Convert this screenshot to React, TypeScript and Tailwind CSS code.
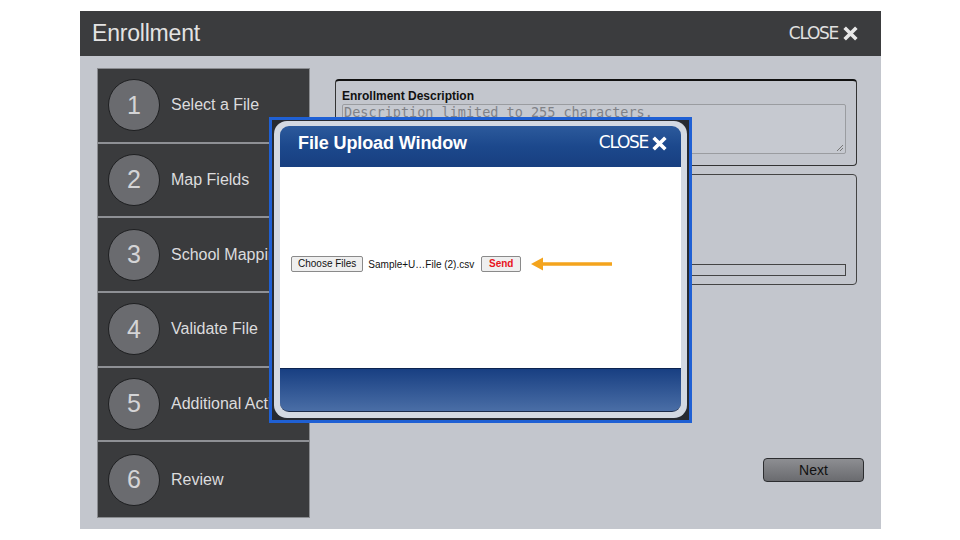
import React from "react";

const CloseX = ({ color, size = 17 }: { color: string; size?: number }) => (
  <svg width={size} height={size} viewBox="0 0 16 16">
    <path d="M2.5 2.5 L13.5 13.5 M13.5 2.5 L2.5 13.5" stroke={color} strokeWidth="3.4" strokeLinecap="butt" />
  </svg>
);

const steps = ["Select a File", "Map Fields", "School Mapping", "Validate File", "Additional Actions", "Review"];

export default function App() {
  return (
    <div className="w-[960px] h-[540px] bg-white relative overflow-hidden" style={{ fontFamily: '"Liberation Sans", Arial, sans-serif' }}>
      <div className="absolute left-[80px] top-[11px] w-[801px] h-[518px] bg-[#c3c6cd] flex flex-col rounded-tl-[3px]">
        {/* Header */}
        <div className="h-[45px] bg-[#3b3c3e] flex items-center justify-between pl-[12px] pr-[22px] shrink-0">
          <span className="text-[23px] text-[#e3e3e3] tracking-[-0.2px]">Enrollment</span>
          <div className="flex items-center gap-[4px] text-[#e0e0e0]">
            <span className="text-[17px] tracking-[-1.3px]" style={{ fontFamily: '"DejaVu Sans", sans-serif' }}>CLOSE</span>
            <CloseX color="#e8e8e8" size={17} />
          </div>
        </div>
        {/* Body */}
        <div className="flex pl-[17px] pt-[12px] flex-1">
          <div className="w-[213px] h-[450px] bg-[#3a3b3d] border border-[#8a8c90] flex flex-col shrink-0">
            {steps.map((s, i) => (
              <div
                key={s}
                className={`h-[75px] flex items-center pl-[10px] gap-[11px] overflow-hidden ${i < 5 ? "border-b-2 border-[#8e9095]" : ""}`}
              >
                <div className="w-[52px] h-[52px] rounded-full bg-[#6a6b6f] border border-[#1e1f21] flex items-center justify-center shrink-0">
                  <span className="text-[25px] text-[#d4d4d6]">{i + 1}</span>
                </div>
                <span className="text-[16px] text-[#dcdcde] whitespace-nowrap">{s}</span>
              </div>
            ))}
          </div>
          <div className="flex flex-col ml-[25px] w-[529px]">
            <div className="mt-[11px] w-[522px] h-[87px] border border-[#333] border-t-2 border-t-[#111] rounded-[4px] px-[6px] pt-[8px]">
              <div className="text-[12px] font-bold text-[#111] leading-[14px]">Enrollment Description</div>
              <div className="mt-[1px] w-[504px] h-[50px] border border-[#9a9ca0] rounded-[2px] bg-[#c6c9d0] px-[1px] relative text-[13.5px] leading-[15px]">
                <span className="text-[#808288]" style={{ fontFamily: '"DejaVu Sans Mono", monospace' }}>
                  Description limited to 255 characters.
                </span>
                <svg className="absolute right-[1px] bottom-[1px]" width="8" height="8" viewBox="0 0 8 8">
                  <path d="M7 1 L1 7 M7 4 L4 7" stroke="#777" strokeWidth="1" />
                </svg>
              </div>
            </div>
            <div className="mt-[8px] w-[522px] h-[111px] border border-[#444] rounded-[4px] flex flex-col justify-end px-[10px] pb-[8px]">
              <div className="w-full h-[12px] border border-[#444] bg-[#c3c6cd]" />
            </div>
            <button className="self-end mt-[173px] w-[101px] h-[24px] rounded-[4px] border border-[#2c2d30] bg-gradient-to-b from-[#8d8e92] to-[#6a6b6f] text-[14px] text-[#111]">
              Next
            </button>
          </div>
        </div>
      </div>

      {/* Modal overlay */}
      <div className="absolute left-[269px] top-[117px] w-[423px] h-[306px] border-[3px] border-[#1f60d4] bg-[#262a31] p-[2px] pt-[1px]">
        <div className="w-full h-full bg-[#d3d9e2] rounded-[13px] p-[6px] pt-[5px] flex flex-col">
          <div className="h-[41px] bg-gradient-to-b from-[#2c5a9c] via-[#1c488c] to-[#183f80] rounded-t-[9px] flex items-center justify-between pl-[18px] pr-[13px] pb-[7px]">
            <span className="text-[18px] font-bold text-white tracking-[-0.1px]">File Upload Window</span>
            <div className="flex items-center gap-[3px] text-white">
              <span className="text-[17px] tracking-[-1.3px]" style={{ fontFamily: '"DejaVu Sans", sans-serif' }}>CLOSE</span>
              <CloseX color="#ffffff" size={17} />
            </div>
          </div>
          <div className="h-[201px] bg-white flex items-center pl-[11px] pb-[7px]">
            <button className="h-[16px] px-[6px] border border-[#8a8a8a] rounded-[2px] bg-[#efefef] text-[10px] text-[#111] leading-none">
              Choose Files
            </button>
            <span className="ml-[5px] text-[10px] text-[#111]">Sample+U…File (2).csv</span>
            <button className="ml-[7px] h-[16px] w-[40px] border border-[#8a8a8a] rounded-[2px] bg-[#efefef] text-[10px] font-bold text-[#e8141c] leading-none">
              Send
            </button>
            <svg className="ml-[10px]" width="82" height="14" viewBox="0 0 82 14">
              <path d="M0 7 L12 0.5 L12 5.3 L81 5.3 L81 8.7 L12 8.7 L12 13.5 Z" fill="#f4a41d" />
            </svg>
          </div>
          <div className="flex-1 bg-gradient-to-b from-[#183f82] to-[#4a6ea6] rounded-b-[9px] border-t border-[#0c2350] border-b border-b-[#1a2a48]" />
        </div>
      </div>
    </div>
  );
}
